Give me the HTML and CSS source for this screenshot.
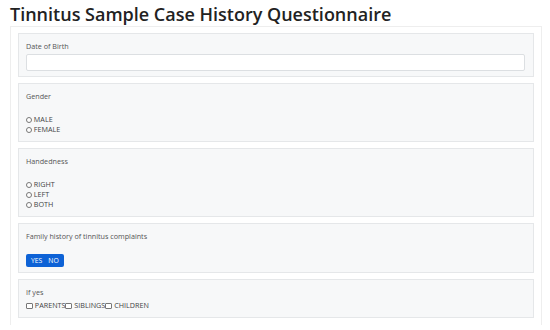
FILE: index.html
```html
<!DOCTYPE html>
<html lang="en">
<head>
    <meta charset="UTF-8">
    <meta name="viewport" content="width=device-width, initial-scale=1.0">
    <title>Tinnitus Sample Case History Questionnaire</title>
    <link rel="stylesheet" href="styles.css">
</head>
<body>

    <h1 class="page-title">Tinnitus Sample Case History Questionnaire</h1>

    <form class="form-card">
        <div class="field-panel field-panel-input">
            <label class="field-label" for="dob">Date of Birth</label>
            <input class="text-input" type="text" id="dob">
        </div>

        <div class="field-panel">
            <div class="field-label">Gender</div>
            <div class="choice-list">
                <label class="choice"><input type="radio" name="gender"> MALE</label>
                <label class="choice"><input type="radio" name="gender"> FEMALE</label>
            </div>
        </div>

        <div class="field-panel">
            <div class="field-label">Handedness</div>
            <div class="choice-list">
                <label class="choice"><input type="radio" name="hand"> RIGHT</label>
                <label class="choice"><input type="radio" name="hand"> LEFT</label>
                <label class="choice"><input type="radio" name="hand"> BOTH</label>
            </div>
        </div>

        <div class="field-panel">
            <div class="field-label">Family history of tinnitus complaints</div>
            <div class="btn-group">
                <button type="button" class="btn">YES</button>
                <button type="button" class="btn">NO</button>
            </div>
        </div>

        <div class="field-panel">
            <div class="field-label">If yes</div>
            <div class="check-row">
                <label class="choice"><input type="checkbox"> PARENTS</label><label class="choice"><input type="checkbox"> SIBLINGS</label><label class="choice"><input type="checkbox"> CHILDREN</label>
            </div>
        </div>
    </form>

</body>
</html>
```

FILE: styles.css
```css
body {
    font-family: "Open Sans", Arial, sans-serif;
    margin: 0;
    padding: 0;
    background-color: #fff;
    color: #444;
}
.page-title {
    margin: 0;
    padding: 3px 10px 0;
    height: 23px;
    font-size: 18px;
    font-weight: 600;
    color: #222;
    line-height: 22px;
}
.form-card {
    margin: 0 8px 0 10px;
    padding: 6px 7px 1px;
    border: 1px solid #eeeeee;
    border-bottom: none;
}
.field-panel {
    background-color: #f7f8f9;
    border: 1px solid #e5e7e9;
    padding: 7px 8px 7px 7px;
    margin-bottom: 6px;
}
.field-panel-input {
    padding-bottom: 5px;
}
.field-label {
    display: block;
    font-size: 7.2px;
    line-height: 10px;
    color: #555;
    margin-bottom: 3px;
}
.text-input {
    display: block;
    box-sizing: border-box;
    width: 100%;
    height: 17px;
    margin: 0;
    border: 1px solid #dcdfe2;
    border-radius: 2px;
    background-color: #fff;
}
.choice-list {
    margin-top: 13px;
}
.check-row {
    margin-top: 1px;
    font-size: 7.2px;
    line-height: 10px;
}
.choice {
    display: block;
    font-size: 7.2px;
    line-height: 10px;
    color: #444;
}
.check-row .choice {
    display: inline;
}
.choice input {
    appearance: none;
    box-sizing: border-box;
    width: 6px;
    height: 6px;
    margin: 0;
    border: 1px solid #777;
    border-radius: 50%;
    vertical-align: -0.5px;
    background-color: #fff;
}
.choice input[type="checkbox"] {
    width: 7px;
    height: 6px;
    border-radius: 1px;
}
.btn-group {
    display: flex;
    width: max-content;
    margin-top: 13px;
    margin-bottom: -2px;
    background-color: #0d62d6;
    border-radius: 2px;
    padding: 0 2px;
}
.btn {
    font-family: inherit;
    font-size: 6.8px;
    line-height: 13px;
    height: 13px;
    padding: 0 3px;
    margin: 0;
    border: none;
    background: none;
    color: #fff;
}
```
